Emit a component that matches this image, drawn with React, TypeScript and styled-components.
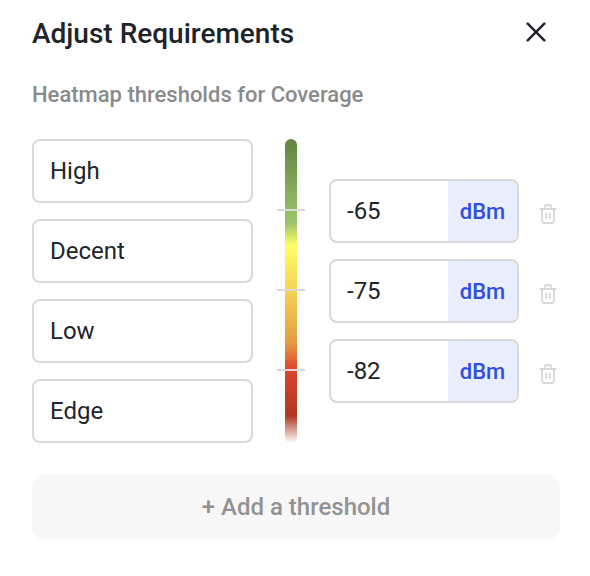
import React from "react";
import styled, { createGlobalStyle } from "styled-components";

const GlobalStyle = createGlobalStyle`
  *, *::before, *::after { box-sizing: border-box; }
  body { margin: 0; background: #fff; font-family: Roboto, sans-serif; color: #202429; }
`;

const Dialog = styled.main`
  width: 590px;
  height: 576px;
  padding: 17px 30px 0 32px;
  background: #fff;
`;

const Header = styled.header`
  display: flex;
  justify-content: space-between;
  align-items: center;
  height: 34px;
`;

const Title = styled.h1`
  margin: 0;
  font-size: 28px;
  line-height: 34px;
  font-weight: 500;
`;

const IconButton = styled.button`
  display: flex;
  padding: 0;
  border: 0;
  background: none;
  color: inherit;
`;

const CloseButton = styled(IconButton)`
  margin: -4px 14px 0 0;
`;

const Subtitle = styled.h2`
  margin: 30px 0 0;
  font-size: 22px;
  line-height: 28px;
  font-weight: 500;
  color: #8a8a8a;
`;

const Thresholds = styled.section`
  display: flex;
  align-items: flex-start;
  margin-top: 30px;
`;

const Column = styled.div`
  display: flex;
  flex-direction: column;
  gap: 16px;
`;

const Levels = styled(Column)`
  width: 221px;
`;

const Values = styled(Column)`
  margin: 40px 0 0 32px;
`;

const Field = styled.div`
  display: flex;
  align-items: center;
  height: 64px;
  padding-left: 16px;
  border: 2px solid #d9d9d9;
  border-radius: 8px;
  font-size: 24px;
`;

const ValueField = styled(Field)`
  width: 190px;
  justify-content: space-between;
  overflow: hidden;
`;

const Unit = styled.span`
  display: flex;
  align-items: center;
  justify-content: center;
  width: 69px;
  height: 100%;
  background: #e9edfc;
  color: #304fe0;
  font-size: 22px;
  font-weight: 500;
`;

const ValueRow = styled.div`
  display: flex;
  align-items: center;
  gap: 20px;
`;

const DeleteButton = styled(IconButton)`
  margin-top: 6px;
  color: #d9d9d9;
`;

const Scale = styled.div`
  display: flex;
  flex-direction: column;
  align-items: center;
  gap: 78px;
  width: 12px;
  height: 304px;
  margin-left: 32px;
  padding-top: 70px;
  border-radius: 6px;
  background: linear-gradient(#618243 0%, #9fc66b 28%, #ffff66 35%, #f4c452 54%, #e59b43 67%, #dc482a 75.5%, #d0432a 79%, #ae3820 91%, #ffffff 100%);
`;

const Tick = styled.span`
  width: 28px;
  height: 2px;
  background: #d9d9d9;
`;

const AddButton = styled.button`
  width: 528px;
  height: 64px;
  margin-top: 32px;
  border: 0;
  border-radius: 12px;
  background: #f7f7f7;
  color: #929292;
  font: 500 24px Roboto, sans-serif;
`;

const levels = ["High", "Decent", "Low", "Edge"];
const limits = [-65, -75, -82];

const TrashIcon = () => (
  <svg width="18" height="20" viewBox="0 0 18 20" fill="none" stroke="currentColor" strokeWidth="1.9" strokeLinecap="round" strokeLinejoin="round">
    <path d="M1.5 5h15M5.6 5V3.4Q5.6 1 8 1h2q2.4 0 2.4 2.4V5M3 5v11.6Q3 19 5.4 19h7.2q2.4 0 2.4-2.4V5M7.3 9.4v5.2M10.8 9.4v5.2" />
  </svg>
);

export default function App() {
  return (
    <Dialog>
      <GlobalStyle />
      <Header>
        <Title>Adjust Requirements</Title>
        <CloseButton aria-label="Close">
          <svg width="20" height="20" viewBox="0 0 20 20" stroke="currentColor" strokeWidth="2.5" strokeLinecap="round">
            <path d="M1.7 1.7l16.6 16.6M18.3 1.7L1.7 18.3" />
          </svg>
        </CloseButton>
      </Header>
      <Subtitle>Heatmap thresholds for Coverage</Subtitle>
      <Thresholds>
        <Levels>
          {levels.map((level) => <Field key={level}>{level}</Field>)}
        </Levels>
        <Scale>
          {limits.map((limit) => <Tick key={limit} />)}
        </Scale>
        <Values>
          {limits.map((limit) => (
            <ValueRow key={limit}>
              <ValueField>{limit}<Unit>dBm</Unit></ValueField>
              <DeleteButton aria-label="Delete threshold"><TrashIcon /></DeleteButton>
            </ValueRow>
          ))}
        </Values>
      </Thresholds>
      <AddButton>+ Add a threshold</AddButton>
    </Dialog>
  );
}
